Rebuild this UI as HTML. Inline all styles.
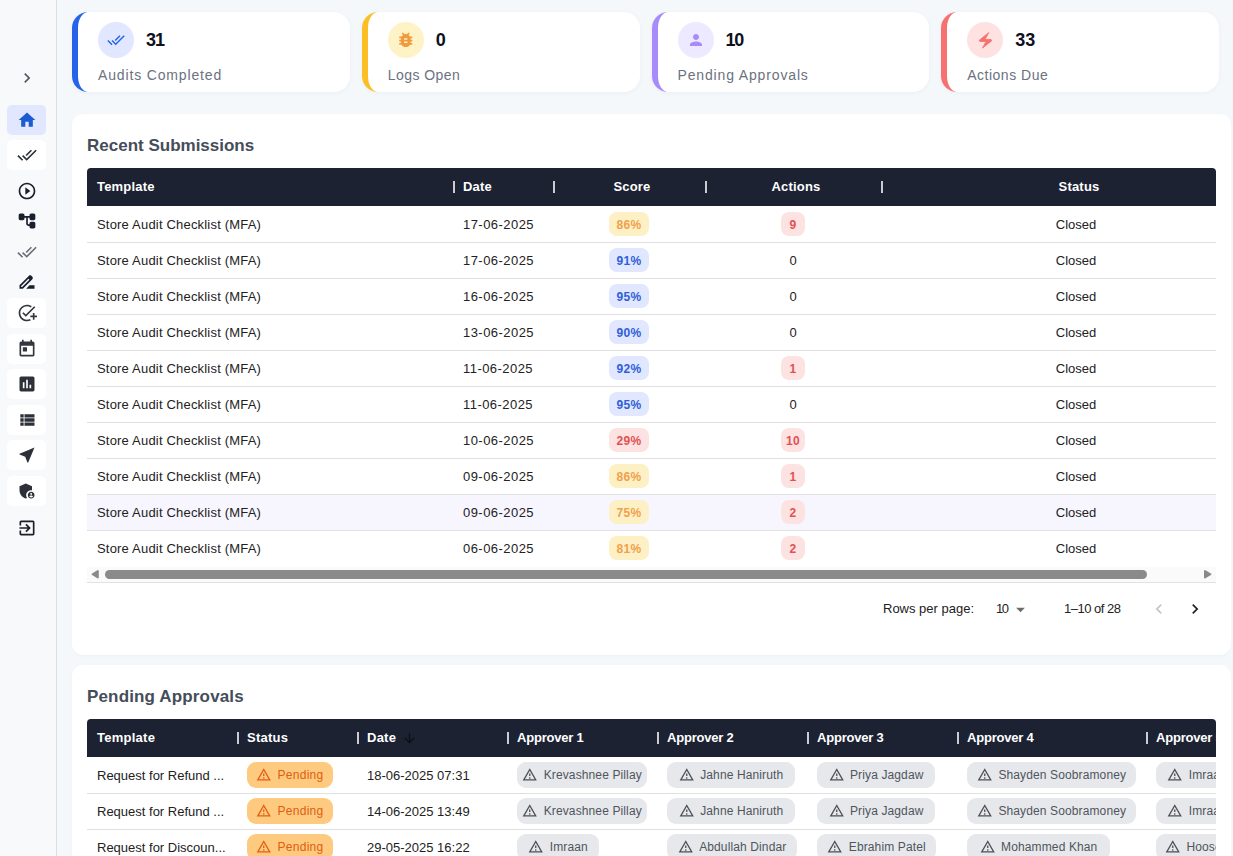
<!DOCTYPE html><html><head><meta charset="utf-8"><style>
*{box-sizing:border-box;margin:0;padding:0}
html,body{width:1233px;height:856px;overflow:hidden}
body{background:#f5f8fb;font-family:"Liberation Sans",sans-serif;position:relative;color:#1f2937}
.abs{position:absolute}
#side{position:absolute;left:0;top:0;width:57px;height:856px;background:#f8f9fb;border-right:1px solid #dcdee1}
.sb{position:absolute;left:7px;width:39px;height:30px;border-radius:5px}.sb svg{position:absolute;left:10px;top:5px}
.sbi{position:absolute;left:17px;width:20px;height:20px}
.card{position:absolute;top:12px;width:277.75px;height:80px;background:#fff;border-radius:16px;border-left:6px solid;box-shadow:0 1px 4px rgba(30,40,70,.05)}
.kc{position:absolute;left:20px;top:10px;width:36px;height:36px;border-radius:50%;display:flex;align-items:center;justify-content:center}
.kn{position:absolute;left:68px;top:17px;font-weight:bold;font-size:18px;line-height:22px;color:#0f1020}
.kl{position:absolute;left:20px;top:54px;font-size:14px;line-height:18px;color:#6b7280;letter-spacing:.85px}
.panel{position:absolute;left:72px;width:1159px;background:#fff;border-radius:11px;box-shadow:0 1px 3px rgba(30,40,70,.04)}
.ptitle{position:absolute;left:15px;font-weight:bold;font-size:17px;line-height:20px;color:#454d5a}
.thead{position:absolute;left:15px;width:1129px;height:38px;background:#1c2232;border-radius:4px 4px 0 0;overflow:hidden}
.th{position:absolute;top:0;height:38px;line-height:38px;color:#fff;font-weight:bold;font-size:13px;white-space:nowrap;letter-spacing:.2px}
.sep{position:absolute;top:13px;width:2px;height:12px;background:#c9ccd3}
.tbody{position:absolute;left:15px;width:1129px;overflow:hidden;padding-top:1px}.tr:last-child{border-bottom:0}
.tr{position:relative;height:36px;border-bottom:1px solid #e0e0e0}
.td{position:absolute;top:0;height:35px;line-height:35px;font-size:13px;color:#222;white-space:nowrap}
.chip{position:absolute;top:5px;height:24px;line-height:27px;border-radius:8px;text-align:center;font-weight:bold;font-size:12px;letter-spacing:.3px}
.ach{position:absolute;top:4px;height:26px;border-radius:9px;display:flex;align-items:center;justify-content:center;font-size:12px;white-space:nowrap;letter-spacing:.12px}.ach span{position:relative;top:0px}
</style></head><body>
<div id="side">
<div class="sbi" style="top:68px"><svg width="20" height="20" viewBox="0 0 24 24" style="display:block;"><path fill="#555a61" d="M10 6L8.59 7.41 13.17 12l-4.58 4.59L10 18l6-6z"/></svg></div>
<div class="sb" style="top:105px;background:#e0e7ff"><svg width="20" height="20" viewBox="0 0 24 24" style="display:block;"><path fill="#1d5bd0" d="M10 20v-6h4v6h5v-8h3L12 3 2 12h3v8z"/></svg></div>
<div class="sb" style="top:140px;background:#ffffff"><svg width="20" height="20" viewBox="0 0 24 24" style="display:block;"><path fill="#2b2f38" d="M18 7l-1.41-1.41-6.34 6.34 1.41 1.41L18 7zm4.24-1.41L11.66 16.17 7.48 12l-1.41 1.41L11.66 19l12-12-1.42-1.41zM.41 13.41L6 19l1.41-1.41L1.83 12 .41 13.41z"/></svg></div>
<div class="sb" style="top:298px;background:#ffffff"><svg width="20" height="20" viewBox="0 0 24 24" style="display:block;"><path fill="#33363d" d="M22 5.18L10.59 16.6l-4.24-4.24 1.41-1.41 2.83 2.83 10-10L22 5.18zM12 20c-4.41 0-8-3.59-8-8s3.59-8 8-8c1.57 0 3.04.46 4.28 1.25l1.45-1.45C16.1 2.67 14.13 2 12 2 6.48 2 2 6.48 2 12s4.48 10 10 10c1.73 0 3.36-.44 4.78-1.22l-1.5-1.5c-1 .46-2.11.72-3.28.72zm7-5h-3v2h3v3h2v-3h3v-2h-3v-3h-2v3z"/></svg></div>
<div class="sb" style="top:334px;background:#ffffff"><svg width="20" height="20" viewBox="0 0 24 24" style="display:block;"><path fill="#33363d" d="M19 3h-1V1h-2v2H8V1H6v2H5c-1.11 0-1.99.9-1.99 2L3 19c0 1.1.89 2 2 2h14c1.1 0 2-.9 2-2V5c0-1.1-.9-2-2-2zm0 16H5V8h14v11zM7 10h5v5H7z"/></svg></div>
<div class="sb" style="top:369px;background:#ffffff"><svg width="20" height="20" viewBox="0 0 24 24" style="display:block;"><path fill="#2d3038" d="M19 3H5c-1.1 0-2 .9-2 2v14c0 1.1.9 2 2 2h14c1.1 0 2-.9 2-2V5c0-1.1-.9-2-2-2zM9 17H7v-7h2v7zm4 0h-2V7h2v10zm4 0h-2v-4h2v4z"/></svg></div>
<div class="sb" style="top:405px;background:#ffffff"><svg width="20" height="20" viewBox="0 0 24 24" style="display:block;"><path fill="#2d3038" d="M4 14h4v-4H4v4zm0 5h4v-4H4v4zM4 9h4V5H4v4zm5 5h12v-4H9v4zm0 5h12v-4H9v4zM9 5v4h12V5H9z"/></svg></div>
<div class="sb" style="top:440px;background:#ffffff"><svg width="20" height="20" viewBox="0 0 24 24" style="display:block;"><path fill="#2d3038" d="M21 3L3 10.53v.98l6.84 2.65L12.48 21h.98L21 3z"/></svg></div>
<div class="sb" style="top:476px;background:#ffffff"><svg width="20" height="20" viewBox="0 0 24 24" style="display:block;"><path fill="#2d3038" d="M17 11c.34 0 .67.04 1 .09V6.27L10.5 3 3 6.27v4.91c0 4.54 3.2 8.79 7.5 9.82.55-.13 1.08-.32 1.6-.55-.69-.98-1.1-2.17-1.1-3.45 0-3.31 2.69-6 6-6zM17 13c-2.21 0-4 1.79-4 4s1.79 4 4 4 4-1.79 4-4-1.79-4-4-4zm0 1.38c.62 0 1.12.51 1.12 1.12s-.51 1.12-1.12 1.12-1.12-.51-1.12-1.12.5-1.12 1.12-1.12zm0 5.37c-.93 0-1.74-.46-2.240-1.17.05-.72 1.51-1.08 2.24-1.08s2.19.36 2.24 1.08c-.5.71-1.310 1.17-2.240 1.17z"/></svg></div>
<div class="sbi" style="top:181px"><svg width="20" height="20" viewBox="0 0 24 24" style="display:block;"><path fill="#1a1f2e" d="M10 16.5l6-4.5-6-4.5v9zM12 2C6.48 2 2 6.48 2 12s4.48 10 10 10 10-4.48 10-10S17.52 2 12 2zm0 18c-4.41 0-8-3.59-8-8s3.59-8 8-8 8 3.59 8 8-3.59 8-8 8z"/></svg></div>
<div class="sbi" style="top:210.5px"><svg width="20" height="20" viewBox="0 0 24 24" style="display:block;"><path fill="#1a1f2e" d="M17 11h3c1.11 0 2-.9 2-2V5c0-1.11-.9-2-2-2h-3c-1.11 0-2 .9-2 2v1H9.01V5c0-1.11-.9-2-2-2H4c-1.1 0-2 .9-2 2v4c0 1.11.9 2 2 2h3c1.11 0 2-.9 2-2V8h2v7.01c0 1.65 1.34 2.99 2.99 2.99H15v1c0 1.11.9 2 2 2h3c1.11 0 2-.9 2-2v-4c0-1.11-.9-2-2-2h-3c-1.11 0-2 .9-2 2v1h-1.01c-.54 0-.99-.45-.99-.99V8h2v1c0 1.1.9 2 2 2z"/></svg></div>
<div class="sbi" style="top:242px"><svg width="20" height="20" viewBox="0 0 24 24" style="display:block;"><path fill="#6b6f76" d="M18 7l-1.41-1.41-6.34 6.34 1.41 1.41L18 7zm4.24-1.41L11.66 16.17 7.48 12l-1.41 1.41L11.66 19l12-12-1.42-1.41zM.41 13.41L6 19l1.41-1.41L1.83 12 .41 13.41z"/></svg></div>
<div class="sbi" style="top:272px"><svg width="20" height="20" viewBox="0 0 24 24" style="display:block;"><path fill="#1a1f2e" d="M18.41 5.8L17.2 4.59c-.78-.78-2.05-.78-2.83 0l-2.68 2.68L3 15.96V20h4.04l8.74-8.74 2.63-2.63c.79-.78.79-2.05 0-2.83zM6.21 18H5v-1.21l8.66-8.66 1.21 1.21L6.21 18zM11 20l4-4h6v4H11z"/></svg></div>
<div class="sbi" style="top:518px"><svg width="20" height="20" viewBox="0 0 24 24" style="display:block;"><path fill="#1a1f2e" d="M10.09 15.59L11.5 17l5-5-5-5-1.41 1.41L12.67 11H3v2h9.67l-2.58 2.59zM19 3H5c-1.11 0-2 .9-2 2v4h2V5h14v14H5v-4H3v4c0 1.1.89 2 2 2h14c1.1 0 2-.9 2-2V5c0-1.1-.9-2-2-2z"/></svg></div>
</div>
<div class="card" style="left:72px;border-left-color:#2563eb"><div class="kc" style="background:#e0e7ff"><svg width="18" height="18" viewBox="0 0 24 24" style="display:block;"><path fill="#2563eb" d="M18 7l-1.41-1.41-6.34 6.34 1.41 1.41L18 7zm4.24-1.41L11.66 16.17 7.48 12l-1.41 1.41L11.66 19l12-12-1.42-1.41zM.41 13.41L6 19l1.41-1.41L1.83 12 .41 13.41z"/></svg></div><div class="kn" style="letter-spacing:-1px">31</div><div class="kl" style="letter-spacing:.85px">Audits Completed</div></div>
<div class="card" style="left:361.75px;border-left-color:#fbbf24"><div class="kc" style="background:#fef3c7"><svg width="19.5" height="19.5" viewBox="0 0 24 24" style="display:block;"><path fill="#f29a3e" d="M20 8h-2.81c-.45-.78-1.07-1.45-1.82-1.96L17 4.41 15.59 3l-2.17 2.17C12.960 5.06 12.49 5 12 5c-.49 0-.96.06-1.41.17L8.41 3 7 4.41l1.62 1.63C7.88 6.55 7.26 7.22 6.81 8H4v2h2.09c-.05.33-.09.66-.09 1v1H4v2h2v1c0 .34.04.67.09 1H4v2h2.81c1.04 1.79 2.97 3 5.19 3s4.15-1.21 5.19-3H20v-2h-2.090c.05-.33.09-.66.09-1v-1h2v-2h-2v-1c0-.34-.04-.67-.09-1H20V8zm-6 8h-4v-2h4v2zm0-4h-4v-2h4v2z"/></svg></div><div class="kn" style="letter-spacing:0">0</div><div class="kl" style="letter-spacing:.45px">Logs Open</div></div>
<div class="card" style="left:651.5px;border-left-color:#a78bfa"><div class="kc" style="background:#ede9fe"><svg width="18" height="18" viewBox="0 0 24 24" style="display:block;"><path fill="#a78bfa" d="M12 12c2.21 0 4-1.79 4-4s-1.79-4-4-4-4 1.79-4 4 1.79 4 4 4zm0 2c-2.67 0-8 1.34-8 4v2h16v-2c0-2.66-5.33-4-8-4z"/></svg></div><div class="kn" style="letter-spacing:-1.2px">10</div><div class="kl" style="letter-spacing:.85px">Pending Approvals</div></div>
<div class="card" style="left:941.25px;border-left-color:#f87171"><div class="kc" style="background:#fee2e2"><svg width="20" height="20" viewBox="0 0 20 20" style="display:block"><polygon points="13.8,2.6 4.2,10.3 4.9,11.5 11,11.5 7.4,18.1 16.8,10.8 16.1,9.5 10,9.5" fill="#f87171" stroke="#f87171" stroke-width="0.8" stroke-linejoin="round"/></svg></div><div class="kn" style="letter-spacing:0">33</div><div class="kl" style="letter-spacing:.5px">Actions Due</div></div>
<div class="panel" style="top:114px;height:541px">
<div class="ptitle" style="top:22px">Recent Submissions</div>
<div class="thead" style="top:54px">
<div class="th" style="left:10px">Template</div>
<div class="sep" style="left:366px"></div>
<div class="th" style="left:376px">Date</div>
<div class="sep" style="left:466px"></div>
<div class="th" style="left:467px;width:156px;text-align:center">Score</div>
<div class="sep" style="left:618px"></div>
<div class="th" style="left:619px;width:180px;text-align:center">Actions</div>
<div class="sep" style="left:794px"></div>
<div class="th" style="left:795px;width:394px;text-align:center">Status</div>
</div>
<div class="tbody" style="top:92px;height:361px">
<div class="tr" style="">
<div class="td" style="left:10px;letter-spacing:.19px">Store Audit Checklist (MFA)</div>
<div class="td" style="left:376px;letter-spacing:.45px">17-06-2025</div>
<div class="chip" style="left:522px;width:40px;background:#fdf0c4;color:#f0a04b">86%</div>
<div class="chip" style="left:694px;width:24px;background:#fde2e2;color:#e05252">9</div>
<div class="td" style="left:795px;width:388px;text-align:center">Closed</div>
</div>
<div class="tr" style="">
<div class="td" style="left:10px;letter-spacing:.19px">Store Audit Checklist (MFA)</div>
<div class="td" style="left:376px;letter-spacing:.45px">17-06-2025</div>
<div class="chip" style="left:522px;width:40px;background:#e0e7ff;color:#2f5fd8">91%</div>
<div class="td" style="left:694px;width:24px;text-align:center">0</div>
<div class="td" style="left:795px;width:388px;text-align:center">Closed</div>
</div>
<div class="tr" style="">
<div class="td" style="left:10px;letter-spacing:.19px">Store Audit Checklist (MFA)</div>
<div class="td" style="left:376px;letter-spacing:.45px">16-06-2025</div>
<div class="chip" style="left:522px;width:40px;background:#e0e7ff;color:#2f5fd8">95%</div>
<div class="td" style="left:694px;width:24px;text-align:center">0</div>
<div class="td" style="left:795px;width:388px;text-align:center">Closed</div>
</div>
<div class="tr" style="">
<div class="td" style="left:10px;letter-spacing:.19px">Store Audit Checklist (MFA)</div>
<div class="td" style="left:376px;letter-spacing:.45px">13-06-2025</div>
<div class="chip" style="left:522px;width:40px;background:#e0e7ff;color:#2f5fd8">90%</div>
<div class="td" style="left:694px;width:24px;text-align:center">0</div>
<div class="td" style="left:795px;width:388px;text-align:center">Closed</div>
</div>
<div class="tr" style="">
<div class="td" style="left:10px;letter-spacing:.19px">Store Audit Checklist (MFA)</div>
<div class="td" style="left:376px;letter-spacing:.45px">11-06-2025</div>
<div class="chip" style="left:522px;width:40px;background:#e0e7ff;color:#2f5fd8">92%</div>
<div class="chip" style="left:694px;width:24px;background:#fde2e2;color:#e05252">1</div>
<div class="td" style="left:795px;width:388px;text-align:center">Closed</div>
</div>
<div class="tr" style="">
<div class="td" style="left:10px;letter-spacing:.19px">Store Audit Checklist (MFA)</div>
<div class="td" style="left:376px;letter-spacing:.45px">11-06-2025</div>
<div class="chip" style="left:522px;width:40px;background:#e0e7ff;color:#2f5fd8">95%</div>
<div class="td" style="left:694px;width:24px;text-align:center">0</div>
<div class="td" style="left:795px;width:388px;text-align:center">Closed</div>
</div>
<div class="tr" style="">
<div class="td" style="left:10px;letter-spacing:.19px">Store Audit Checklist (MFA)</div>
<div class="td" style="left:376px;letter-spacing:.45px">10-06-2025</div>
<div class="chip" style="left:522px;width:40px;background:#fde2e2;color:#e05252">29%</div>
<div class="chip" style="left:694px;width:24px;background:#fde2e2;color:#e05252">10</div>
<div class="td" style="left:795px;width:388px;text-align:center">Closed</div>
</div>
<div class="tr" style="">
<div class="td" style="left:10px;letter-spacing:.19px">Store Audit Checklist (MFA)</div>
<div class="td" style="left:376px;letter-spacing:.45px">09-06-2025</div>
<div class="chip" style="left:522px;width:40px;background:#fdf0c4;color:#f0a04b">86%</div>
<div class="chip" style="left:694px;width:24px;background:#fde2e2;color:#e05252">1</div>
<div class="td" style="left:795px;width:388px;text-align:center">Closed</div>
</div>
<div class="tr" style="background:#f7f5fe;">
<div class="td" style="left:10px;letter-spacing:.19px">Store Audit Checklist (MFA)</div>
<div class="td" style="left:376px;letter-spacing:.45px">09-06-2025</div>
<div class="chip" style="left:522px;width:40px;background:#fdf0c4;color:#f0a04b">75%</div>
<div class="chip" style="left:694px;width:24px;background:#fde2e2;color:#e05252">2</div>
<div class="td" style="left:795px;width:388px;text-align:center">Closed</div>
</div>
<div class="tr" style="">
<div class="td" style="left:10px;letter-spacing:.19px">Store Audit Checklist (MFA)</div>
<div class="td" style="left:376px;letter-spacing:.45px">06-06-2025</div>
<div class="chip" style="left:522px;width:40px;background:#fdf0c4;color:#f0a04b">81%</div>
<div class="chip" style="left:694px;width:24px;background:#fde2e2;color:#e05252">2</div>
<div class="td" style="left:795px;width:388px;text-align:center">Closed</div>
</div>
</div>
<div class="abs" style="left:15px;top:453px;width:1129px;height:15px;background:#fafafa"></div>
<div class="abs" style="left:15px;top:468px;width:1129px;height:1px;background:#e2e2e2"></div>
<div class="abs" style="left:33px;top:456px;width:1042px;height:9px;background:#8a8a8a;border-radius:5px"></div>
<svg class="abs" style="left:17px;top:454px" width="12" height="12" viewBox="0 0 12 12"><polygon points="8.8,3 8.8,9.5 3.6,6.25" fill="#8a8a8a" stroke="#8a8a8a" stroke-width="2" stroke-linejoin="round"/></svg>
<svg class="abs" style="left:1130px;top:454px" width="12" height="12" viewBox="0 0 12 12"><polygon points="3,3 3,9.5 8.4,6.25" fill="#8a8a8a" stroke="#8a8a8a" stroke-width="2" stroke-linejoin="round"/></svg>
<div class="abs" style="left:811px;top:487px;font-size:13px;line-height:16px;color:#222">Rows per page:</div>
<div class="abs" style="left:924px;top:487px;font-size:13px;line-height:16px;color:#222;letter-spacing:-1.5px">10</div>
<div class="abs" style="left:938px;top:485px"><svg width="21" height="21" viewBox="0 0 24 24" style="display:block;"><path fill="#6b6b6b" d="M7 10l5 5 5-5z"/></svg></div>
<div class="abs" style="left:992px;top:487px;font-size:13px;line-height:16px;color:#222;letter-spacing:-.5px">1–10 of 28</div>
<div class="abs" style="left:1077px;top:484.5px"><svg width="20" height="20" viewBox="0 0 24 24" style="display:block;"><path fill="#c4c4c4" d="M15.41 7.41L14 6l-6 6 6 6 1.41-1.41L10.83 12z"/></svg></div>
<div class="abs" style="left:1113px;top:484.5px"><svg width="20" height="20" viewBox="0 0 24 24" style="display:block;"><path fill="#222" d="M10 6L8.59 7.41 13.17 12l-4.58 4.59L10 18l6-6z"/></svg></div>
</div>
<div class="panel" style="top:665px;height:260px">
<div class="ptitle" style="top:22px;letter-spacing:.15px">Pending Approvals</div>
<div class="thead" style="top:54px">
<div class="th" style="left:10px;letter-spacing:.25px">Template</div>
<div class="sep" style="left:150px"></div>
<div class="th" style="left:160px;letter-spacing:.25px">Status</div>
<div class="sep" style="left:270px"></div>
<div class="th" style="left:280px;letter-spacing:.25px">Date</div>
<div class="sep" style="left:420px"></div>
<div class="th" style="left:430px;letter-spacing:-.2px">Approver 1</div>
<div class="sep" style="left:570px"></div>
<div class="th" style="left:580px;letter-spacing:-.2px">Approver 2</div>
<div class="sep" style="left:720px"></div>
<div class="th" style="left:730px;letter-spacing:-.2px">Approver 3</div>
<div class="sep" style="left:870px"></div>
<div class="th" style="left:880px;letter-spacing:-.2px">Approver 4</div>
<div class="sep" style="left:1059px"></div>
<div class="th" style="left:1069px;letter-spacing:-.2px">Approver 5</div>
<div class="abs" style="left:314.5px;top:11.5px"><svg width="15" height="15" viewBox="0 0 24 24" style="display:block;"><path fill="#0b0e16" d="M20 12l-1.41-1.41L13 16.17V4h-2v12.17l-5.58-5.59L4 12l8 8 8-8z"/></svg></div>
</div>
<div class="tbody" style="top:92px;height:200px">
<div class="tr">
<div class="td" style="left:10px">Request for Refund ...</div>
<div class="ach" style="left:160px;width:86px;background:#fdca80;color:#e35d0f"><svg width="15.5" height="15.5" viewBox="0 0 24 24" style="display:block;position:relative;top:-0.5px"><path fill="#e35d0f" d="M12 5.99L19.53 19H4.47L12 5.99M12 2L1 21h22L12 2zm1 14h-2v2h2v-2zm0-6h-2v4h2v-4z"/></svg><span style="margin-left:5.5px;letter-spacing:.3px">Pending</span></div>
<div class="td" style="left:280px">18-06-2025 07:31</div>
<div class="ach" style="left:430px;width:130px;background:#e6e8eb;color:#50555d;"><svg width="15.5" height="15.5" viewBox="0 0 24 24" style="display:block;position:relative;top:-0.5px"><path fill="#4b5058" d="M12 5.99L19.53 19H4.47L12 5.99M12 2L1 21h22L12 2zm1 14h-2v2h2v-2zm0-6h-2v4h2v-4z"/></svg><span style="margin-left:6px">Krevashnee Pillay</span></div>
<div class="ach" style="left:580px;width:128px;background:#e6e8eb;color:#50555d;"><svg width="15.5" height="15.5" viewBox="0 0 24 24" style="display:block;position:relative;top:-0.5px"><path fill="#4b5058" d="M12 5.99L19.53 19H4.47L12 5.99M12 2L1 21h22L12 2zm1 14h-2v2h2v-2zm0-6h-2v4h2v-4z"/></svg><span style="margin-left:6px">Jahne Haniruth</span></div>
<div class="ach" style="left:730px;width:118px;background:#e6e8eb;color:#50555d;"><svg width="15.5" height="15.5" viewBox="0 0 24 24" style="display:block;position:relative;top:-0.5px"><path fill="#4b5058" d="M12 5.99L19.53 19H4.47L12 5.99M12 2L1 21h22L12 2zm1 14h-2v2h2v-2zm0-6h-2v4h2v-4z"/></svg><span style="margin-left:6px">Priya Jagdaw</span></div>
<div class="ach" style="left:880px;width:169px;background:#e6e8eb;color:#50555d;"><svg width="15.5" height="15.5" viewBox="0 0 24 24" style="display:block;position:relative;top:-0.5px"><path fill="#4b5058" d="M12 5.99L19.53 19H4.47L12 5.99M12 2L1 21h22L12 2zm1 14h-2v2h2v-2zm0-6h-2v4h2v-4z"/></svg><span style="margin-left:6px">Shayden Soobramoney</span></div>
<div class="ach" style="left:1069px;width:82px;background:#e6e8eb;color:#50555d;"><svg width="15.5" height="15.5" viewBox="0 0 24 24" style="display:block;position:relative;top:-0.5px"><path fill="#4b5058" d="M12 5.99L19.53 19H4.47L12 5.99M12 2L1 21h22L12 2zm1 14h-2v2h2v-2zm0-6h-2v4h2v-4z"/></svg><span style="margin-left:6px">Imraan</span></div>
</div>
<div class="tr">
<div class="td" style="left:10px">Request for Refund ...</div>
<div class="ach" style="left:160px;width:86px;background:#fdca80;color:#e35d0f"><svg width="15.5" height="15.5" viewBox="0 0 24 24" style="display:block;position:relative;top:-0.5px"><path fill="#e35d0f" d="M12 5.99L19.53 19H4.47L12 5.99M12 2L1 21h22L12 2zm1 14h-2v2h2v-2zm0-6h-2v4h2v-4z"/></svg><span style="margin-left:5.5px;letter-spacing:.3px">Pending</span></div>
<div class="td" style="left:280px">14-06-2025 13:49</div>
<div class="ach" style="left:430px;width:130px;background:#e6e8eb;color:#50555d;"><svg width="15.5" height="15.5" viewBox="0 0 24 24" style="display:block;position:relative;top:-0.5px"><path fill="#4b5058" d="M12 5.99L19.53 19H4.47L12 5.99M12 2L1 21h22L12 2zm1 14h-2v2h2v-2zm0-6h-2v4h2v-4z"/></svg><span style="margin-left:6px">Krevashnee Pillay</span></div>
<div class="ach" style="left:580px;width:128px;background:#e6e8eb;color:#50555d;"><svg width="15.5" height="15.5" viewBox="0 0 24 24" style="display:block;position:relative;top:-0.5px"><path fill="#4b5058" d="M12 5.99L19.53 19H4.47L12 5.99M12 2L1 21h22L12 2zm1 14h-2v2h2v-2zm0-6h-2v4h2v-4z"/></svg><span style="margin-left:6px">Jahne Haniruth</span></div>
<div class="ach" style="left:730px;width:118px;background:#e6e8eb;color:#50555d;"><svg width="15.5" height="15.5" viewBox="0 0 24 24" style="display:block;position:relative;top:-0.5px"><path fill="#4b5058" d="M12 5.99L19.53 19H4.47L12 5.99M12 2L1 21h22L12 2zm1 14h-2v2h2v-2zm0-6h-2v4h2v-4z"/></svg><span style="margin-left:6px">Priya Jagdaw</span></div>
<div class="ach" style="left:880px;width:169px;background:#e6e8eb;color:#50555d;"><svg width="15.5" height="15.5" viewBox="0 0 24 24" style="display:block;position:relative;top:-0.5px"><path fill="#4b5058" d="M12 5.99L19.53 19H4.47L12 5.99M12 2L1 21h22L12 2zm1 14h-2v2h2v-2zm0-6h-2v4h2v-4z"/></svg><span style="margin-left:6px">Shayden Soobramoney</span></div>
<div class="ach" style="left:1069px;width:82px;background:#e6e8eb;color:#50555d;"><svg width="15.5" height="15.5" viewBox="0 0 24 24" style="display:block;position:relative;top:-0.5px"><path fill="#4b5058" d="M12 5.99L19.53 19H4.47L12 5.99M12 2L1 21h22L12 2zm1 14h-2v2h2v-2zm0-6h-2v4h2v-4z"/></svg><span style="margin-left:6px">Imraan</span></div>
</div>
<div class="tr">
<div class="td" style="left:10px">Request for Discoun...</div>
<div class="ach" style="left:160px;width:86px;background:#fdca80;color:#e35d0f"><svg width="15.5" height="15.5" viewBox="0 0 24 24" style="display:block;position:relative;top:-0.5px"><path fill="#e35d0f" d="M12 5.99L19.53 19H4.47L12 5.99M12 2L1 21h22L12 2zm1 14h-2v2h2v-2zm0-6h-2v4h2v-4z"/></svg><span style="margin-left:5.5px;letter-spacing:.3px">Pending</span></div>
<div class="td" style="left:280px">29-05-2025 16:22</div>
<div class="ach" style="left:430px;width:82px;background:#e6e8eb;color:#50555d;"><svg width="15.5" height="15.5" viewBox="0 0 24 24" style="display:block;position:relative;top:-0.5px"><path fill="#4b5058" d="M12 5.99L19.53 19H4.47L12 5.99M12 2L1 21h22L12 2zm1 14h-2v2h2v-2zm0-6h-2v4h2v-4z"/></svg><span style="margin-left:6px">Imraan</span></div>
<div class="ach" style="left:580px;width:130px;background:#e6e8eb;color:#50555d;"><svg width="15.5" height="15.5" viewBox="0 0 24 24" style="display:block;position:relative;top:-0.5px"><path fill="#4b5058" d="M12 5.99L19.53 19H4.47L12 5.99M12 2L1 21h22L12 2zm1 14h-2v2h2v-2zm0-6h-2v4h2v-4z"/></svg><span style="margin-left:6px">Abdullah Dindar</span></div>
<div class="ach" style="left:730px;width:119px;background:#e6e8eb;color:#50555d;"><svg width="15.5" height="15.5" viewBox="0 0 24 24" style="display:block;position:relative;top:-0.5px"><path fill="#4b5058" d="M12 5.99L19.53 19H4.47L12 5.99M12 2L1 21h22L12 2zm1 14h-2v2h2v-2zm0-6h-2v4h2v-4z"/></svg><span style="margin-left:6px">Ebrahim Patel</span></div>
<div class="ach" style="left:880px;width:143px;background:#e6e8eb;color:#50555d;"><svg width="15.5" height="15.5" viewBox="0 0 24 24" style="display:block;position:relative;top:-0.5px"><path fill="#4b5058" d="M12 5.99L19.53 19H4.47L12 5.99M12 2L1 21h22L12 2zm1 14h-2v2h2v-2zm0-6h-2v4h2v-4z"/></svg><span style="margin-left:6px">Mohammed Khan</span></div>
<div class="ach" style="left:1069px;width:140px;background:#e6e8eb;color:#50555d;justify-content:flex-start;padding-left:9px;"><svg width="15.5" height="15.5" viewBox="0 0 24 24" style="display:block;position:relative;top:-0.5px"><path fill="#4b5058" d="M12 5.99L19.53 19H4.47L12 5.99M12 2L1 21h22L12 2zm1 14h-2v2h2v-2zm0-6h-2v4h2v-4z"/></svg><span style="margin-left:6px">Hooseinmia Khan</span></div>
</div>
</div>
</div>
</body></html>
